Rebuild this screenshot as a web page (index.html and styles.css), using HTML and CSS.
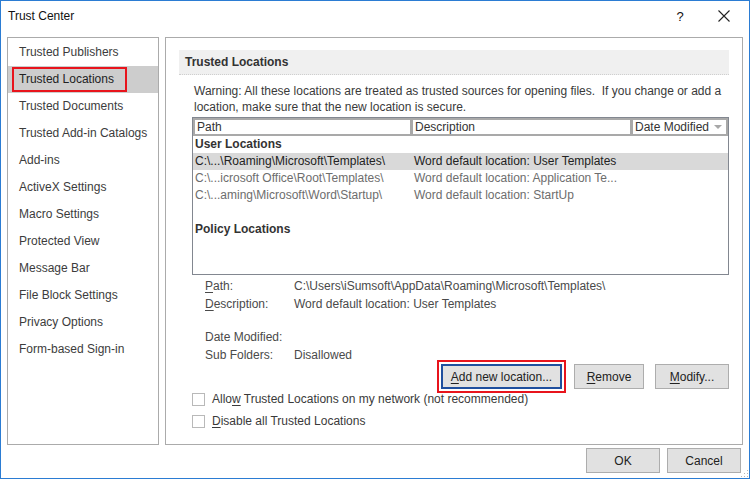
FILE: index.html
```html
<!DOCTYPE html>
<html>
<head>
<meta charset="utf-8">
<title>Trust Center</title>
<link rel="stylesheet" href="styles.css">
</head>
<body>
<div class="window">
  <div class="titlebar">
    <span class="title">Trust Center</span>
    <span class="help">?</span>
    <span class="close"><svg width="12" height="12" viewBox="0 0 12 12"><path d="M0.5 0.5 L11.5 11.5 M11.5 0.5 L0.5 11.5" stroke="#222" stroke-width="1.1" fill="none"/></svg></span>
  </div>
  <div class="main">
    <nav class="sidebar">
      <div class="item">Trusted Publishers</div>
      <div class="item selected"><span class="mark">Trusted Locations</span></div>
      <div class="item">Trusted Documents</div>
      <div class="item">Trusted Add-in Catalogs</div>
      <div class="item">Add-ins</div>
      <div class="item">ActiveX Settings</div>
      <div class="item">Macro Settings</div>
      <div class="item">Protected View</div>
      <div class="item">Message Bar</div>
      <div class="item">File Block Settings</div>
      <div class="item">Privacy Options</div>
      <div class="item">Form-based Sign-in</div>
    </nav>
    <section class="panel">
      <div class="panel-head">Trusted Locations</div>
      <p class="warning">Warning: All these locations are treated as trusted sources for opening files.&nbsp; If you change or add a<br>location, make sure that the new location is secure.</p>
      <div class="table">
        <div class="thead">
          <div class="th c-path">Path</div>
          <div class="th c-desc">Description</div>
          <div class="th c-date">Date Modified <span class="sort"></span></div>
        </div>
        <div class="group">User Locations</div>
        <div class="row selected"><span class="c-path">C:\...\Roaming\Microsoft\Templates\</span><span class="c-desc">Word default location: User Templates</span></div>
        <div class="row dim"><span class="c-path">C:\...icrosoft Office\Root\Templates\</span><span class="c-desc">Word default location: Application Te...</span></div>
        <div class="row dim"><span class="c-path">C:\...aming\Microsoft\Word\Startup\</span><span class="c-desc">Word default location: StartUp</span></div>
        <div class="row"></div>
        <div class="group">Policy Locations</div>
      </div>
      <div class="details">
        <span class="lbl"><u>P</u>ath:</span><span class="val">C:\Users\iSumsoft\AppData\Roaming\Microsoft\Templates\</span>
        <span class="lbl"><u>D</u>escription:</span><span class="val">Word default location: User Templates</span>
        <span class="spacer"></span><span class="spacer"></span>
        <span class="lbl">Date Modified:</span><span class="val"></span>
        <span class="lbl">Sub Folders:</span><span class="val">Disallowed</span>
      </div>
      <div class="actions">
        <button class="btn btn-add"><u>A</u>dd new location...</button>
        <button class="btn btn-remove"><u>R</u>emove</button>
        <button class="btn btn-modify"><u>M</u>odify...</button>
      </div>
      <div class="checks">
        <label class="check"><span class="box"></span><span class="ctext">Allo<u>w</u> Trusted Locations on my network (not recommended)</span></label>
        <label class="check"><span class="box"></span><span class="ctext"><u>D</u>isable all Trusted Locations</span></label>
      </div>
    </section>
  </div>
  <div class="footer">
    <button class="btn btn-foot">OK</button>
    <button class="btn btn-foot">Cancel</button>
  </div>
  <svg class="grip" width="8" height="8" viewBox="0 0 8 8">
    <rect x="6" y="0" width="1" height="1" fill="#b8b8b8"/>
    <rect x="3" y="3" width="1" height="1" fill="#b8b8b8"/>
    <rect x="6" y="3" width="1" height="1" fill="#b8b8b8"/>
    <rect x="0" y="6" width="1" height="1" fill="#b8b8b8"/>
    <rect x="3" y="6" width="1" height="1" fill="#b8b8b8"/>
    <rect x="6" y="6" width="1" height="1" fill="#b8b8b8"/>
  </svg>
</div>
</body>
</html>
```

FILE: styles.css
```css
* { box-sizing: border-box; }
html, body { margin: 0; padding: 0; background: #fff; }
body {
  font-family: "Liberation Sans", Arial, sans-serif;
  font-size: 12px;
  color: #333;
}
u { text-decoration: underline; text-underline-offset: 2px; }

.window {
  position: relative;
  width: 750px;
  height: 479px;
  border: 1px solid #2b7cd3;
  background: #fff;
  display: flex;
  flex-direction: column;
}

.titlebar {
  height: 30px;
  display: flex;
  align-items: center;
  padding-left: 7px;
  color: #111;
}
.title { flex: 1; font-size: 12px; }
.help { width: 12px; font-size: 13px; margin-right: 32px; text-align: center; }
.close { width: 12px; height: 12px; margin-right: 19px; display: flex; }

.main {
  display: flex;
  gap: 6px;
  padding: 6px 6px 0 6px;
  height: 414px;
}

.sidebar {
  width: 152px;
  height: 408px;
  border: 1px solid #ababab;
  padding-top: 1px;
}
.item {
  height: 27px;
  line-height: 27px;
  padding-left: 11px;
  color: #3c3c3c;
  white-space: nowrap;
}
.item.selected {
  background: #cdcdcd;
  padding-left: 4px;
  display: flex;
  align-items: center;
}
.mark {
  display: inline-block;
  border: 2px solid #e8141c;
  height: 25px;
  line-height: 21px;
  padding-left: 5px;
  width: 115px;
  color: #222;
}

.panel {
  width: 578px;
  height: 408px;
  border: 1px solid #ababab;
  padding: 12px 13px 0 13px;
}
.panel-head {
  height: 25px;
  line-height: 24px;
  background: #f0f0f0;
  border-bottom: 1px dotted #cfcfcf;
  padding-left: 6px;
  font-weight: bold;
  color: #333;
}
.warning {
  margin: 8px 0 0 15px;
  line-height: 16px;
  color: #3a3a3a;
  white-space: nowrap;
}

.table {
  margin: 2px 0 0 13px;
  height: 158px;
  border: 1px solid #828790;
  overflow: hidden;
}
.thead {
  display: flex;
  height: 18px;
}
.th {
  border: 2px solid #a9a9a9;
  line-height: 14px;
  padding-left: 2px;
  color: #333;
  position: relative;
  white-space: nowrap;
}
.th + .th { border-left-width: 1px; }
.c-path { width: 219px; flex: none; }
.c-desc { width: 220px; flex: none; }
.c-date { flex: 1; }
.sort {
  position: absolute;
  right: 4px;
  top: 5px;
  width: 0; height: 0;
  border-left: 4px solid transparent;
  border-right: 4px solid transparent;
  border-top: 4px solid #a8a8a8;
}
.group {
  height: 17px;
  line-height: 17px;
  padding-left: 2px;
  font-weight: bold;
  color: #333;
}
.row {
  height: 17px;
  line-height: 17px;
  display: flex;
  white-space: nowrap;
}
.row .c-path { padding-left: 2px; }
.row .c-desc { padding-left: 2px; }
.row.selected { background: #d9d9d9; color: #222; }
.row.dim { color: #6d6d6d; }

.details {
  display: grid;
  grid-template-columns: 89px 1fr;
  grid-template-rows: 18px 18px 15px 18px 18px;
  margin: 2px 0 0 26px;
  line-height: 18px;
  color: #4a4a4a;
  white-space: nowrap;
}

.actions {
  display: flex;
  justify-content: flex-end;
  gap: 11px;
  margin-top: 0;
}
.btn {
  font-family: inherit;
  font-size: 12px;
  color: #222;
  height: 25px;
  background: #e1e1e1;
  border: 1px solid #adadad;
  padding: 0;
  margin: 0;
}
.btn-add {
  width: 121px;
  border: 2px solid #1f4f9e;
  outline: 2px solid #e8141c;
  outline-offset: 2px;
  margin-right: 1px;
}
.btn-remove { width: 70px; }
.btn-modify { width: 74px; }

.checks {
  margin: 0 0 0 13px;
  display: flex;
  flex-direction: column;
  gap: 2px;
}
.check {
  height: 20px;
  display: flex;
  align-items: center;
  gap: 7px;
  color: #3a3a3a;
  white-space: nowrap;
}
.box {
  width: 13px;
  height: 13px;
  flex: none;
  border: 1px solid #b9b9b9;
  background: #fff;
}

.footer {
  flex: 1;
  display: flex;
  justify-content: flex-end;
  align-items: flex-start;
  gap: 7px;
  padding: 3px 8px 0 0;
}
.btn-foot { width: 74px; }

.grip {
  position: absolute;
  right: 0;
  bottom: 0;
}
```
